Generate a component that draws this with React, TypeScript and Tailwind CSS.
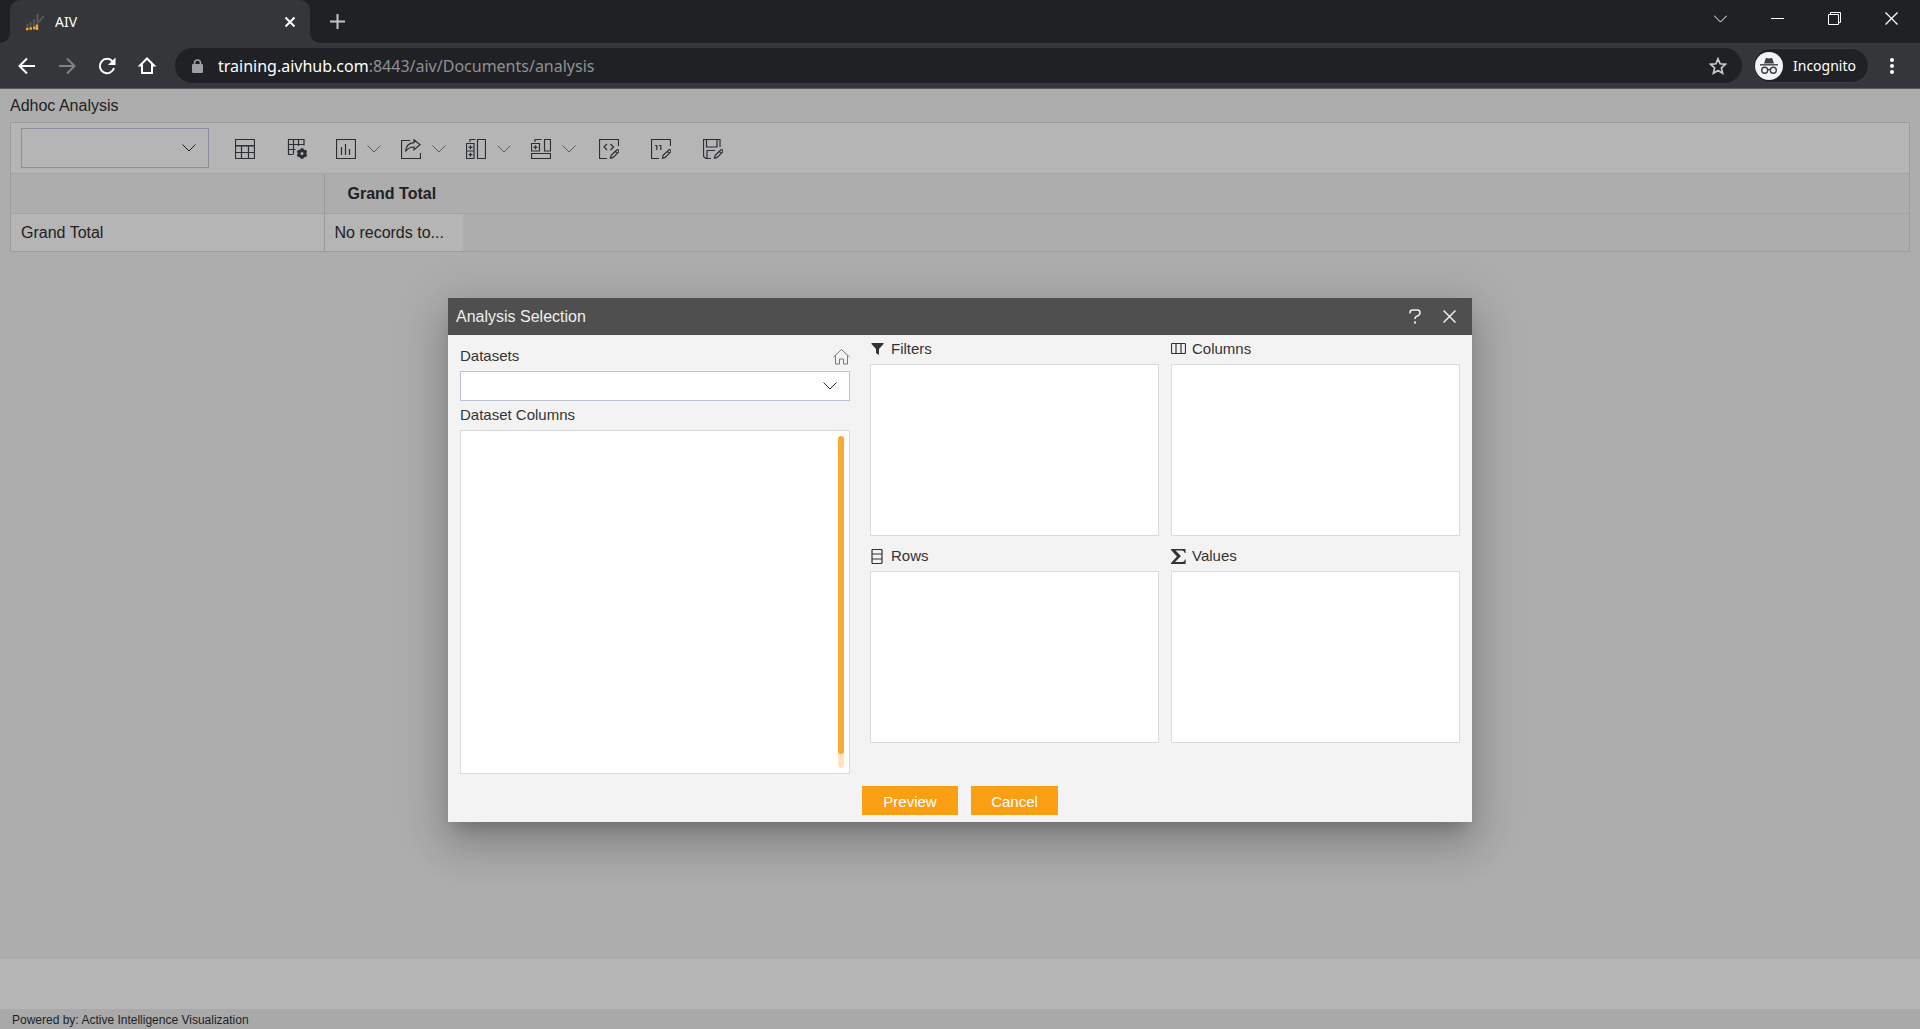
import { useState } from "react";
import type { ReactNode } from "react";

type IconName = "grid" | "gridSettings" | "chart" | "export" | "subTotals" | "grandTotals" | "conditional" | "number" | "save";

interface Tool {
  label: string;
  icon: IconName;
  menu?: boolean;
}

const tools: Tool[] = [
  { label: "Show table", icon: "grid" },
  { label: "Field settings", icon: "gridSettings" },
  { label: "Chart", icon: "chart", menu: true },
  { label: "Export", icon: "export", menu: true },
  { label: "Sub totals", icon: "subTotals", menu: true },
  { label: "Grand totals", icon: "grandTotals", menu: true },
  { label: "Conditional formatting", icon: "conditional" },
  { label: "Number formatting", icon: "number" },
  { label: "Save report", icon: "save" },
];

const pencil = <path d="M11.500 19.200l.6-2.900 5.400-5.100a1.400 1.400 0 0 1 2 2l-5.300 5.200zM16.400 12.300l2 2" />;

const icons: Record<IconName, ReactNode> = {
  grid: (
    <>
      <path d="M.5.5h19v19H.5zM.5 13.500h19M6.500 7v12.500M13.500 7v12.500" />
      <path d="M.5 6.800h19" strokeWidth={1.5} />
    </>
  ),
  gridSettings: (
    <>
      <path d="M6 15.500H1.500V.5h15.500v6M6.500.5v15M11.500.5v6.500M1.500 5.500h15.500M1.500 10.500h7" />
      <circle cx="15" cy="14.500" r="3" strokeWidth={3} />
      <path d="M15 9.200v2M15 17.800v2M10.400 11.900l1.700 1M17.900 16.100l1.700 1M10.400 17.100l1.700-1M17.900 12.900l1.700-1" strokeWidth={2.800} />
    </>
  ),
  chart: <path d="M.5.5h19v19H.5zM5.500 8v8M9.500 5v11M13.500 10v6" />,
  export: (
    <>
      <path d="M9 1.500H.5v18h19V14" />
      <path d="M13 .8l6 5-6 5V8C9 8 6.500 9.500 4.500 12.500 5 7 8 4 13 3.700z" />
    </>
  ),
  subTotals: (
    <>
      <path d="M.5 4.500h7.500v15H.5zM.5 12h7.500M11.500.5h8v19h-8zM4 3V.5h5.500" />
      <path d="M2.500 8.300h4M4.500 6.300v4M2.500 15.700h4M4.500 13.700v4" />
    </>
  ),
  grandTotals: (
    <path d="M.5 4.500h8v7.500h-8zM13.500.5h6v11.500h-6zM.5 14.500h19v5H.5zM4 3V.5h6.500M2.500 8.300h4M4.500 6.300v4" />
  ),
  conditional: (
    <>
      <path d="M8 19.500H.5V.5h19V7" />
      <path d="M8 5L5 8l3 3M11.500 5l3 3-3 3" />
      {pencil}
    </>
  ),
  number: (
    <>
      <path d="M8 19.500H.5V.5h19V7" />
      <path d="M4 6.500h1.800V11M8 6.500h1.800V11" />
      {pencil}
    </>
  ),
  save: (
    <>
      <path d="M8 19.500H3l-2.500-2V.5h16.500V8M3.500.5V8h10.500V.5M4 19.500v-8h8" />
      {pencil}
    </>
  ),
};

function ToolIcon({ name }: { name: IconName }) {
  return (
    <svg className="size-5" viewBox="0 0 20 20" fill="none" stroke="currentColor" strokeWidth={1.2}>
      {icons[name]}
    </svg>
  );
}

function Chevron({ className = "" }: { className?: string }) {
  return (
    <svg className={`w-[14px] h-2 ${className}`} viewBox="0 0 14 8" fill="none" stroke="currentColor">
      <path d="M.5.5L7 7l6.500-6.500" />
    </svg>
  );
}

function WindowButton({ label, children }: { label: string; children: ReactNode }) {
  return (
    <button aria-label={label} className="w-[57px] h-9 flex items-center justify-center">
      <svg className="size-[13px]" viewBox="0 0 13 13" fill="none" stroke="currentColor" strokeWidth={1}>
        {children}
      </svg>
    </button>
  );
}

function NavButton({ label, dim, children }: { label: string; dim?: boolean; children: ReactNode }) {
  return (
    <button aria-label={label} className={`size-10 flex items-center justify-center ${dim ? "text-[#808184]" : "text-white"}`}>
      <svg className="size-5" viewBox="0 0 20 20" fill="none" stroke="currentColor" strokeWidth={2}>
        {children}
      </svg>
    </button>
  );
}

function BrowserBar() {
  return (
    <header className="bg-[#202124] text-white font-['Noto_Sans','Open_Sans',sans-serif]">
      <div className="h-[43px] flex items-stretch">
        <div className="w-2.5 bg-[#35363a]">
          <div className="h-full bg-[#202124] rounded-br-[10px]" />
        </div>
        <div className="w-[300px] bg-[#35363a] rounded-t-[10px] flex items-center pl-4 pr-3.5">
          <svg className="size-[18px]" viewBox="0 0 18 18" fill="none">
            <path d="M1.500 11v3M4.500 9v5M8 6v8M11.500 1v10M14 7l4-4M13 9l2-3" stroke="#5f5f60" strokeWidth={1.6} />
            <path d="M0 16h2.500M3.500 15.500h2.500M7 15h2.500M11 17v-5.500" stroke="#f5a623" strokeWidth={2.4} />
          </svg>
          <span className="ml-[11px] text-[14px]">AIV</span>
          <button aria-label="Close tab" className="ml-auto">
            <svg className="size-3" viewBox="0 0 12 12" stroke="currentColor" strokeWidth={2}>
              <path d="M1.500 1.500l9 9M10.500 1.500l-9 9" />
            </svg>
          </button>
        </div>
        <div className="w-2.5 bg-[#35363a]">
          <div className="h-full bg-[#202124] rounded-bl-[10px]" />
        </div>
        <button aria-label="New tab" className="px-2.5 text-[#c4c5c7]">
          <svg className="size-[15px]" viewBox="0 0 15 15" stroke="currentColor" strokeWidth={2}>
            <path d="M7.500 0v15M0 7.500h15" />
          </svg>
        </button>
        <div className="ml-auto flex">
          <WindowButton label="Search tabs">
            <path d="M0 3.500l6.500 6.500L13 3.500" />
          </WindowButton>
          <WindowButton label="Minimize">
            <path d="M0 6.500h13" />
          </WindowButton>
          <WindowButton label="Restore">
            <path d="M.5 2.500h10v10H.5zM2.500 2.500v-2h10v10h-2" />
          </WindowButton>
          <WindowButton label="Close">
            <path d="M.5.5l12 12M12.500.5l-12 12" strokeWidth={1.3} />
          </WindowButton>
        </div>
      </div>

      <div className="h-[46px] bg-[#35363a] border-b border-[#5b5c5f] flex items-center pl-[7px]">
        <NavButton label="Back">
          <path d="M18 10H3M10 2.500L2.500 10l7.500 7.500" />
        </NavButton>
        <NavButton label="Forward" dim>
          <path d="M2 10h15M10 2.500l7.500 7.500-7.500 7.500" />
        </NavButton>
        <NavButton label="Reload">
          <path d="M15.600 5.400A7.200 7.200 0 1 0 17 12" />
          <path d="M18.500 1.500v7.500H11z" fill="currentColor" stroke="none" />
        </NavButton>
        <NavButton label="Home">
          <path d="M5 17V9.500H3L10 2.500l7 7h-2V17z" />
        </NavButton>
        <div className="ml-2 flex-1 h-[35px] rounded-full bg-[#202124] flex items-center pl-[17px] pr-[15px]">
          <svg className="w-[11px] h-[14px] text-[#9aa0a6]" viewBox="0 0 11 14">
            <rect x="0" y="5" width="11" height="9" rx="1.2" fill="currentColor" />
            <path d="M2.500 6V4a3 3 0 0 1 6 0v2" fill="none" stroke="currentColor" strokeWidth={1.5} />
          </svg>
          <span className="ml-[15px] text-base text-[#8f9195]">
            <span className="text-white">training.aivhub.com</span>:8443/aiv/Documents/analysis
          </span>
          <button aria-label="Bookmark" className="ml-auto text-[#c8c9cb]">
            <svg className="size-[18px]" viewBox="0 0 18 18" fill="none" stroke="currentColor" strokeWidth={1.7}>
              <path d="M9 1.800l2.100 5 5.400.5-4.100 3.600 1.200 5.300L9 13.400l-4.600 2.800 1.200-5.300L1.500 7.300l5.400-.5z" />
            </svg>
          </button>
        </div>
        <button className="ml-[11px] h-[35px] rounded-full bg-[#202124] border border-[#3c3d41] flex items-center pl-px pr-3 text-[14px]">
          <svg className="size-7" viewBox="0 0 28 28">
            <circle cx="14" cy="14" r="14" fill="#f1f3f4" />
            <path d="M9 11.500L10.700 6.500q.3-.8 1.200-.5l2.100.6 2.100-.6q.9-.3 1.200.5L19 11.500z" fill="#3c4043" />
            <path d="M5 12.800h18" stroke="#3c4043" strokeWidth={1.4} />
            <g fill="none" stroke="#3c4043" strokeWidth={1.4}>
              <circle cx="9.700" cy="18.300" r="3" />
              <circle cx="18.300" cy="18.300" r="3" />
              <path d="M12.700 17.800q1.300-.8 2.600 0" />
            </g>
          </svg>
          <span className="ml-2.5">Incognito</span>
        </button>
        <button aria-label="Menu" className="w-[46px] mr-[5px] flex justify-center">
          <svg className="w-1 h-4" viewBox="0 0 4 16" fill="currentColor">
            <circle cx="2" cy="2" r="2" />
            <circle cx="2" cy="8" r="2" />
            <circle cx="2" cy="14" r="2" />
          </svg>
        </button>
      </div>
    </header>
  );
}

function PivotView() {
  return (
    <div className="mx-2.5 border border-[#9c9c9c]">
      <div className="h-[51px] bg-[#b5b5b5] border-b border-[#a4a4a4] flex items-center pl-2.5">
        <div className="relative">
          <select aria-label="Report list" className="block w-[188px] h-10 appearance-none border border-[#8b919c]" />
          <Chevron className="absolute right-[13px] top-4 pointer-events-none" />
        </div>
        <div className="ml-2.5 flex text-[#2b2f33]">
          {tools.map((t) => (
            <button
              key={t.label}
              aria-label={t.label}
              className={`h-10 pt-0.5 flex items-center ${t.menu ? "w-[65px] pl-[13px] gap-[11px]" : "w-[52px] pl-4"}`}
            >
              <ToolIcon name={t.icon} />
              {t.menu && <Chevron className="text-[#5a5d60]" />}
            </button>
          ))}
        </div>
      </div>
      <table className="w-full table-fixed border-collapse text-left">
        <colgroup>
          <col className="w-[313px]" />
          <col className="w-[139px]" />
          <col />
        </colgroup>
        <thead>
          <tr className="h-[39px] border-b border-[#a4a4a4]">
            <td className="border-r border-[#999999]" />
            <th className="pl-[23px] pt-0.5 font-bold">Grand Total</th>
            <td />
          </tr>
        </thead>
        <tbody>
          <tr className="h-[38px]">
            <th className="pl-2.5 pt-0.5 font-normal bg-[#b5b5b5] border-r border-[#999999]">Grand Total</th>
            <td className="pl-2.5 pt-0.5 bg-[#b5b5b5]">No records to...</td>
            <td />
          </tr>
        </tbody>
      </table>
    </div>
  );
}

function DropZone({ title, icon }: { title: string; icon: ReactNode }) {
  return (
    <section>
      <h3 className="h-[29px] flex items-center gap-1.5">
        <svg className="size-[15px]" viewBox="0 0 15 15" fill="none" stroke="#333333" strokeWidth={1.2}>
          {icon}
        </svg>
        {title}
      </h3>
      <div className="h-[172px] bg-white border border-[#dadada]" />
    </section>
  );
}

function AnalysisDialog({ onClose }: { onClose: () => void }) {
  return (
    <div
      role="dialog"
      aria-labelledby="dialog-title"
      className="w-[1024px] bg-[#f3f3f3] text-[15px] text-[#333333] shadow-[0_11px_15px_-7px_rgba(0,0,0,0.2),0_24px_38px_3px_rgba(0,0,0,0.14),0_9px_46px_8px_rgba(0,0,0,0.12)]"
    >
      <div className="h-[37px] bg-[#4f4f4f] text-[#eeeeee] flex items-center pl-2 pr-4">
        <h2 id="dialog-title" className="text-base">Analysis Selection</h2>
        <button aria-label="Help" className="ml-auto">
          <svg className="w-3 h-[15px]" viewBox="0 0 12 15" fill="none" stroke="currentColor" strokeWidth={1.5}>
            <path d="M1 4.500V3.500Q1 1 3.500 1H8.500Q11 1 11 3.500T8.500 7Q6 7.300 6 10" />
            <path d="M6 12.500v2" strokeWidth={2} />
          </svg>
        </button>
        <button aria-label="Close" className="ml-[22px]" onClick={onClose}>
          <svg className="size-[13px]" viewBox="0 0 13 13" stroke="currentColor" strokeWidth={1.5}>
            <path d="M.5.5l12 12M12.500.5l-12 12" />
          </svg>
        </button>
      </div>

      <div className="flex px-3">
        <div className="w-[390px] pt-[7px]">
          <div className="h-[29px] flex items-center justify-between">
            <label htmlFor="datasets">Datasets</label>
            <button aria-label="Default dataset">
              <svg className="size-[17px]" viewBox="0 0 17 17" fill="none" stroke="#777777">
                <path d="M.5 9L8.500 1.500l8 7.500M2.500 7.500v8.500h4v-5h4v5h4V7.500" />
              </svg>
            </button>
          </div>
          <div className="relative">
            <select id="datasets" className="block w-full h-[30px] appearance-none bg-white border border-[#bcc3d3]" />
            <Chevron className="absolute right-[13px] top-[11px] pointer-events-none" />
          </div>
          <h3 className="h-[29px] flex items-center">Dataset Columns</h3>
          <div className="h-[344px] bg-white border border-[#dadada] p-[5px] flex justify-end">
            <div className="w-1.5 rounded-full bg-[#fee4c3]">
              <div className="h-[318px] rounded-full bg-[#fbaa33]" />
            </div>
          </div>
        </div>

        <div className="ml-5 flex-1 grid grid-cols-2 gap-x-3 gap-y-1.5 content-start">
          <DropZone title="Filters" icon={<path d="M1.500 1h12v1l-4.500 5v6l-3-2V7l-4.500-5z" fill="#333333" stroke="none" />} />
          <DropZone title="Columns" icon={<path d="M1.500 1.500h12q1 0 1 1v8q0 1-1 1h-12q-1 0-1-1v-8q0-1 1-1zM5 1.500v10M10 1.500v10" />} />
          <DropZone title="Rows" icon={<path d="M3 .5h8q1 0 1 1v12q0 1-1 1h-8q-1 0-1-1v-12q0-1 1-1zM2 5h10M2 10h10" />} />
          <DropZone
            title="Values"
            icon={<path d="M0 0h14.500v4h-.8Q13.300 1.500 11 1.500H4.500L10 7l-6 6h7q2.500 0 3-2.500h.8L14.500 15H0v-1l6-6.500L0 1z" fill="#333333" stroke="none" />}
          />
        </div>
      </div>

      <div className="flex justify-center gap-[13px] pt-3 pb-[7px] text-white">
        <button className="w-24 h-[29px] pt-1 bg-[#fa9f14]">Preview</button>
        <button className="w-[87px] h-[29px] pt-1 bg-[#fa9f14]" onClick={onClose}>Cancel</button>
      </div>
    </div>
  );
}

export default function App() {
  const [open, setOpen] = useState(true);

  return (
    <div className="min-h-screen flex flex-col bg-[#adadad] text-[#212121] font-['Liberation_Sans',Arial,sans-serif]">
      <BrowserBar />
      <div className="relative flex-1 flex flex-col">
        <main className="flex-1">
          <h1 className="h-[33px] flex items-center px-2.5">Adhoc Analysis</h1>
          <PivotView />
        </main>
        <div className="h-[50px] bg-[#b5b5b5]" />
        <footer className="h-5 pt-0.5 flex items-center px-3 bg-[#a9a9a9] text-[12px] text-[#1c1f2b]">
          Powered by: Active Intelligence Visualization
        </footer>
        {open && (
          <div className="absolute inset-0 pt-0.5 flex items-center justify-center">
            <AnalysisDialog onClose={() => setOpen(false)} />
          </div>
        )}
      </div>
    </div>
  );
}
